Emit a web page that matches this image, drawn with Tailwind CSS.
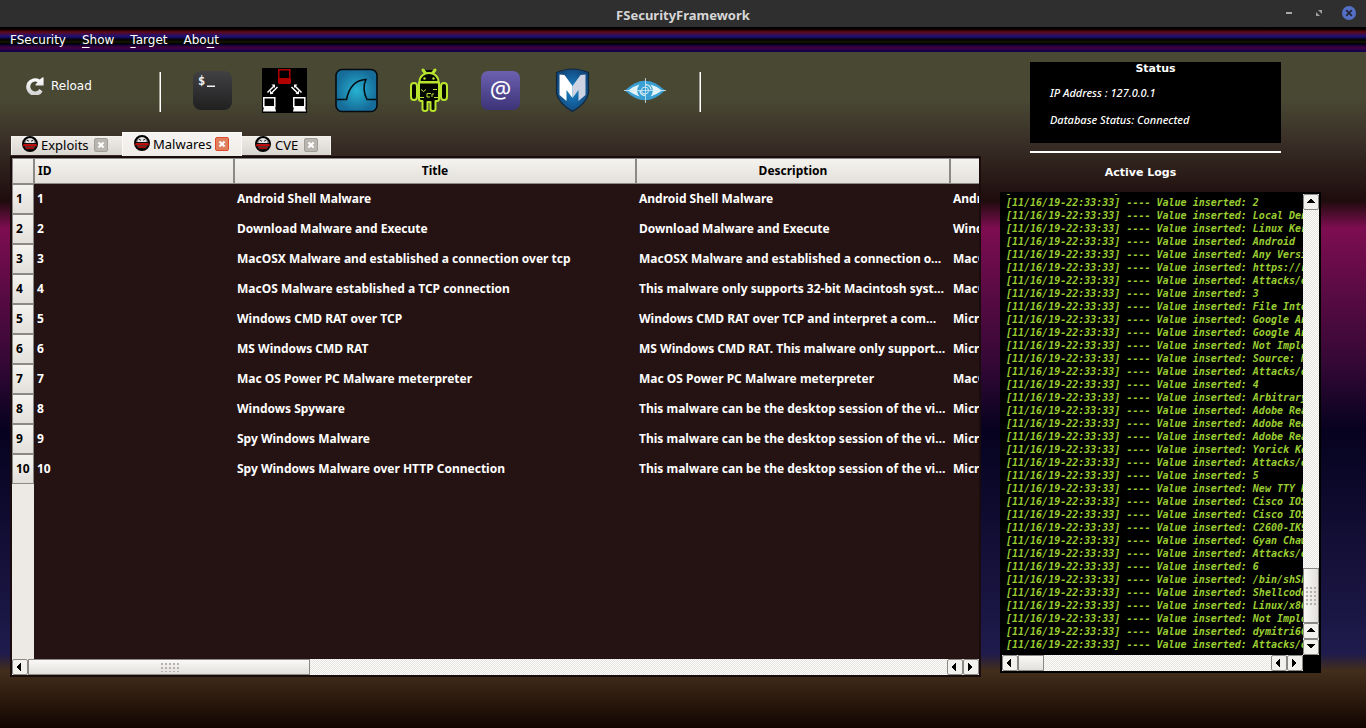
<!DOCTYPE html>
<html lang="en">
<head>
<meta charset="utf-8">
<title>FSecurityFramework</title>
<script src="https://cdn.jsdelivr.net/npm/@tailwindcss/browser@4"></script>
</head>
<body class="min-h-screen flex flex-col overflow-hidden text-white text-xs font-['DejaVu_Sans',sans-serif] bg-[#120500]">

<svg class="hidden">
  <defs>
    <symbol id="up" viewBox="0 0 8 4"><path d="M3 0h2v1h1v1h1v1h1v1H0V3h1V2h1V1h1z" fill="#000"/></symbol>
    <symbol id="down" viewBox="0 0 8 4"><path d="M0 0h8v1H7v1H6v1H5v1H3V3H2V2H1V1H0z" fill="#000"/></symbol>
    <symbol id="left" viewBox="0 0 4 8"><path d="M4 0v8H3V7H2V6H1V5H0V3h1V2h1V1h1V0z" fill="#000"/></symbol>
    <symbol id="right" viewBox="0 0 4 8"><path d="M0 0v8h1V7h1V6h1V5h1V3H3V2H2V1H1V0z" fill="#000"/></symbol>
    <symbol id="cross" viewBox="0 0 14 14"><path d="M4 4l6 6M10 4l-6 6" stroke="#fff" stroke-width="2.4"/></symbol>
    <symbol id="agent" viewBox="0 0 16 16">
      <circle cx="8" cy="8" r="7" fill="#8c8c8c" stroke="#000" stroke-width="2"/>
      <path d="M3.800 7Q4 2.200 8 2.200T12.200 7z" fill="#e4e4e4"/>
      <path d="M5 4.400l2 .8M11 4.400l-2 .8" stroke="#222" stroke-width="1"/>
      <path d="M1.500 7h13v1.200h-13z" fill="#111"/>
      <path d="M1.200 8.200h13.600v2.200H1.200z" fill="#c80000"/>
      <path d="M2 10.400h12v1H2zM3 13h10v1H3z" fill="#111"/>
      <path d="M4 11.400h8v1.600H4z" fill="#b00000"/>
    </symbol>
  </defs>
</svg>

<header class="h-[27px] shrink-0 relative flex items-center justify-end bg-[#2f2f2f]">
  <h1 class="absolute inset-x-0 top-[5px] text-center text-[13px] leading-5 font-bold text-[#d6d6d6] font-['Noto_Sans',sans-serif]">FSecurityFramework</h1>
  <div class="relative flex items-center gap-5 pr-2.5 pb-0.5">
    <button aria-label="Minimize" class="w-3.5 h-3.5 flex items-center justify-center"><svg class="w-1.5 h-0.5" viewBox="0 0 6 2"><path d="M0 0h6v2H0z" fill="#a8a8a8"/></svg></button>
    <button aria-label="Restore" class="w-1.5 h-3.5 flex items-center"><svg class="w-1.5 h-1.5" viewBox="0 0 6 6"><path d="M2 0h4v4zM0 2v4h4z" fill="#a0a0a0"/></svg></button>
    <button aria-label="Close"><svg class="w-3.5 h-3.5 block" viewBox="0 0 14 14"><circle cx="7" cy="7" r="7" fill="#5470c6"/><path d="M4.200 4.200l5.600 5.600M9.800 4.200L4.200 9.800" stroke="#24283a" stroke-width="1.800"/></svg></button>
  </div>
</header>

<nav class="h-[25px] shrink-0 flex items-center gap-4 px-2.5 bg-[linear-gradient(to_bottom,#000_0,#080000_9%,#620812_20%,#3a0e50_29%,#1c1074_39%,#0b0630_46%,#020200_52%,#171700_60%,#050500_66%,#01002c_70%,#3c0038_79%,#3a0044_86%,#12004c_96%,#100548_100%)]">
  <button>FSecurity</button>
  <button><span class="underline underline-offset-3">S</span>how</button>
  <button><span class="underline underline-offset-3">T</span>arget</button>
  <button>Abo<span class="underline underline-offset-3">u</span>t</button>
</nav>

<main class="grow flex pl-2.5 pr-[45px] gap-[19px] bg-[linear-gradient(to_bottom,#484833_0,#484833_7%,#3a3028_13%,#1e0c0c_22%,#7d0d50_26%,#340835_46%,#06021f_56%,#1f1b4c_89%,#432e1b_91.500%,#120500_100%)]">

  <section class="grow min-w-0 flex flex-col pb-[51px]">
    <div class="h-20 shrink-0 flex items-center pl-4">
      <button class="w-[133px] flex items-center gap-[7px] pb-3">
        <svg class="w-[18px] h-[18px]" viewBox="0 0 18 18"><defs><linearGradient id="rl" x1="0" y1="0" x2="0" y2="1"><stop offset="0" stop-color="#fff"/><stop offset="1" stop-color="#d0d0d0"/></linearGradient></defs><path d="M13.800 2.600A8.800 8.800 0 1 0 16.600 14.400L13.400 12A4.900 4.900 0 1 1 11.600 5.200L9.600 7.200v1.200H17.600V.4h-1.400z" fill="url(#rl)"/></svg>
        Reload
      </button>
      <div class="w-0.5 h-10 border-l border-[#a9a498] bg-white"></div>
      <div class="flex items-center gap-[26px] pl-[29px] pr-[31px] pb-1">
        <button aria-label="Terminal"><svg class="w-[46px] h-[46px] block" viewBox="0 0 46 46"><defs><linearGradient id="tm" x1="0" y1="0" x2="0" y2="1"><stop offset="0" stop-color="#414143"/><stop offset="1" stop-color="#202021"/></linearGradient></defs><rect x="3" y="4" width="39" height="39" rx="8" fill="url(#tm)"/><text x="8" y="18" font-family="DejaVu Sans Mono" font-size="12" font-weight="bold" fill="#f2f2f2">$</text><path d="M17 18.500h8v1.500h-8z" fill="#f2f2f2"/></svg></button>
        <button aria-label="Network attack"><svg class="w-[46px] h-[46px] block" viewBox="0 0 46 46"><path d="M0 1h45v45H0z" fill="#000"/>
          <g fill="none" stroke-width="1.500"><path d="M16.800 2.800h11v9h-11z" stroke="#b00000"/><path d="M1.800 30.800h11v9h-11zM31.800 30.800h11v9h-11z" stroke="#fff"/></g>
          <path d="M16 12h13v4h-1l1 1H16l1-1h-1z" fill="#b00000"/>
          <path d="M2 40h11l1 4.500H1zM32 40h11l1 4.500H31z" fill="#fff"/>
          <g stroke="#fff" stroke-width="1.500" fill="#fff"><path d="M5.500 25.500l7-7M8.500 27l7-7M39.500 25.500l-7-7M36.500 27l-7-7"/><path d="M9.500 18h3.500v3.500zM8 24v3.500h3.500zM35.500 18H32v3.500zM37 24v3.500h-3.500z" stroke="none" transform="translate(0 -.5)"/></g></svg></button>
        <button aria-label="Packet capture"><svg class="w-[46px] h-[46px] block" viewBox="0 0 46 46"><defs><radialGradient id="ws"><stop offset="0" stop-color="#27b2d0"/><stop offset="1" stop-color="#166d9a"/></radialGradient></defs><rect x="2" y="2.500" width="41" height="42" rx="6" fill="url(#ws)" stroke="#050b0f" stroke-width="1.600"/><path d="M3 32.500H12.500C15 20 21 13 32 12.500C29 18 29.500 26 33 32.500H42" fill="none" stroke="#050b0f" stroke-width="1.500"/></svg></button>
        <button aria-label="Android"><svg class="w-[46px] h-[46px] block" viewBox="0 0 46 46"><g fill="#050800" stroke="#b9e52f" stroke-width="2" stroke-linejoin="round"><path d="M17 3l3 4h6l3-4" stroke-width="3" stroke-linecap="round"/><path d="M13.500 15C13.500 3 32.500 3 32.500 15z"/><rect x="5" y="16" width="6" height="17" rx="3"/><rect x="35" y="16" width="6" height="17" rx="3"/><path d="M13 15.500h20V32q0 2-2 2h-1.500v8q0 2-2.500 2t-2.500-2v-7h-3v7q0 2-2.500 2t-2.500-2v-8H15q-2 0-2-2z"/></g><g fill="none" stroke="#b9e52f" stroke-width="1"><path d="M15 22.500l2.500 2 2.500-2M31 22.500h-4M14 30.500h4M32 30.500h-4M25 26.500h-4v3.500h3M26 30v-3h2"/></g><g fill="#b9e52f"><circle cx="18.500" cy="11.500" r="1.200"/><circle cx="27.500" cy="11.500" r="1.200"/></g></svg></button>
        <button aria-label="Mail"><svg class="w-[46px] h-[46px] block" viewBox="0 0 46 46"><defs><linearGradient id="at" x1="0" y1="0" x2="0" y2="1"><stop offset="0" stop-color="#6b61b0"/><stop offset="1" stop-color="#3d3378"/></linearGradient></defs><rect x="3" y="4" width="39" height="39" rx="7" fill="url(#at)"/><text x="22.500" y="31" text-anchor="middle" font-family="Noto Sans" font-size="24" fill="#fff">@</text></svg></button>
        <button aria-label="Metasploit"><svg class="w-[46px] h-[46px] block" viewBox="0 0 46 46"><defs><radialGradient id="ms"><stop offset="0" stop-color="#1a86cc"/><stop offset="1" stop-color="#124a80"/></radialGradient></defs><path d="M22.500 2Q30 2 38.500 5.500V26Q37 36 22.500 44.500Q8 36 6.500 26V5.500Q15 2 22.500 2z" fill="url(#ms)" stroke="#10263c" stroke-width="1.200"/><path d="M9.500 7.500l5 .5l8 11V31l-6-8v11l-7-6z" fill="#fff"/><path d="M35.500 7.500l-5 .5l-8 11V31l6-8v11l7-6z" fill="#cdd3e3"/></svg></button>
        <button aria-label="Watch"><svg class="w-[46px] h-[46px] block" viewBox="0 0 46 46"><path d="M3 23.500Q23 4 43 23.500Q23 43 3 23.500z" fill="#3a9fd4"/><path d="M6 23.500Q12 19 17.500 17.500Q13 23.500 17.500 29.500Q12 28 6 23.500zM40 23.500Q34 19 28.500 17.500Q33 23.500 28.500 29.500Q34 28 40 23.500z" fill="#e3f4f8"/><g fill="none" stroke="#cfeaf5"><circle cx="23" cy="23.500" r="3.500"/><path d="M18 23.500a5 5 0 0 0 5 5M23 17.500a6 6 0 0 1 6 5" stroke-width="1.500"/><path d="M23.500 11v25M2 23.500h42" stroke-width=".8"/></g></svg></button>
      </div>
      <div class="w-0.5 h-10 border-l border-[#a9a498] bg-white"></div>
    </div>

    <div role="tablist" class="h-6 shrink-0 flex items-end pl-px text-black text-[13px] leading-5 font-['Noto_Sans',sans-serif]">
      <div class="w-[111px] h-[19px] mb-px flex items-center gap-[3px] pl-2.5 pb-0.5 border-t border-l border-[#f4f2ef] bg-linear-to-b from-[#efece8] to-[#d9d6d1]">
        <svg class="w-4 h-4 mb-0.5"><use href="#agent"/></svg><button role="tab">Exploits</button>
        <button aria-label="Close Exploits" class="ml-0.5 border border-[#a19d98] rounded-xs bg-[#b9b5b0]"><svg class="w-3 h-3 block"><use href="#cross"/></svg></button>
      </div>
      <div class="w-[120px] h-6 flex items-center gap-[3px] pl-[11px] pb-0.5 border-t border-x border-[#fbfaf8] bg-linear-to-b from-[#f6f4f2] to-[#efebe7]">
        <svg class="w-4 h-4 mb-0.5"><use href="#agent"/></svg><button role="tab" aria-selected="true">Malwares</button>
        <button aria-label="Close Malwares" class="border border-[#df4a2c] rounded-xs bg-[#df7f5c]"><svg class="w-3 h-3 block"><use href="#cross"/></svg></button>
      </div>
      <div class="w-[89px] h-[19px] mb-px flex items-center gap-1 pl-[13px] pb-0.5 border-t border-r border-[#f4f2ef] bg-linear-to-b from-[#efece8] to-[#d9d6d1]">
        <svg class="w-4 h-4 mb-0.5"><use href="#agent"/></svg><button role="tab">CVE</button>
        <button aria-label="Close CVE" class="ml-0.5 border border-[#a19d98] rounded-xs bg-[#b9b5b0]"><svg class="w-3 h-3 block"><use href="#cross"/></svg></button>
      </div>
    </div>

    <div class="grow flex flex-col border-2 border-[#1a0c0c] bg-[#251313] font-['Noto_Sans',sans-serif] font-bold">
      <div class="grow relative bg-linear-to-r from-[#edeae6] from-[22px] to-[#251313] to-[22px]">
        <table class="w-full table-fixed border-separate border-spacing-0 text-left text-xs leading-4 whitespace-nowrap [&_td]:h-[30px] [&_td]:pl-[3px] [&_td]:pr-1 [&_td]:overflow-hidden [&_td]:text-ellipsis [&_td:last-child]:text-clip [&_td:last-child]:pr-0 [&_th]:text-black [&_th]:bg-linear-to-b [&_th]:from-[#f5f3ef] [&_th]:to-[#e3e0db] [&_th]:border [&_th]:border-[#8b8986] [&_thead_th]:h-[26px] [&_tbody_th]:pl-[3px]">
          <colgroup><col class="w-[22px]"><col class="w-[200px]"><col class="w-[402px]"><col class="w-[314px]"><col></colgroup>
          <thead><tr><th></th><th class="pl-[3px]">ID</th><th class="text-center">Title</th><th class="text-center">Description</th><th class="border-r-0!"></th></tr></thead>
          <tbody>
            <tr><th>1</th><td>1</td><td>Android Shell Malware</td><td>Android Shell Malware</td><td>Andro</td></tr>
            <tr><th>2</th><td>2</td><td>Download Malware and Execute</td><td>Download Malware and Execute</td><td>Wind</td></tr>
            <tr><th>3</th><td>3</td><td>MacOSX Malware and established a connection over tcp</td><td>MacOSX Malware and established a connection over tcp</td><td>MacO</td></tr>
            <tr><th>4</th><td>4</td><td>MacOS Malware established a TCP connection</td><td>This malware only supports 32-bit Macintosh systems</td><td>MacO</td></tr>
            <tr><th>5</th><td>5</td><td>Windows CMD RAT over TCP</td><td>Windows CMD RAT over TCP and interpret a command</td><td>Micro</td></tr>
            <tr><th>6</th><td>6</td><td>MS Windows CMD RAT</td><td>MS Windows CMD RAT. This malware only supports Windows</td><td>Micro</td></tr>
            <tr><th>7</th><td>7</td><td>Mac OS Power PC Malware meterpreter</td><td>Mac OS Power PC Malware meterpreter</td><td>MacO</td></tr>
            <tr><th>8</th><td>8</td><td>Windows Spyware</td><td>This malware can be the desktop session of the victim</td><td>Micro</td></tr>
            <tr><th>9</th><td>9</td><td>Spy Windows Malware</td><td>This malware can be the desktop session of the victim</td><td>Micro</td></tr>
            <tr><th>10</th><td>10</td><td>Spy Windows Malware over HTTP Connection</td><td>This malware can be the desktop session of the victim</td><td>Micro</td></tr>
          </tbody>
        </table>
      </div>
      <div class="h-4 shrink-0 flex bg-[repeating-conic-gradient(#fff_0_25%,#e6e3de_0_50%)] bg-[length:2px_2px]">
        <button aria-label="Scroll left" class="w-4 pr-0.5 flex items-center justify-center rounded-xs border border-[#8b8986] bg-[#f3f1ee]"><svg class="w-1 h-2"><use href="#left"/></svg></button>
        <div class="w-[282px] flex items-center justify-center border border-[#8b8986] bg-linear-to-b from-[#faf9f7] to-[#e3e0dc]"><div class="w-[19px] h-2.5 bg-[radial-gradient(#b5b1ac_1px,transparent_1px)] bg-[length:4px_4px]"></div></div>
        <button aria-label="Scroll back" class="ml-auto w-4 pr-0.5 flex items-center justify-center rounded-xs border border-[#8b8986] bg-[#f3f1ee]"><svg class="w-1 h-2"><use href="#left"/></svg></button>
        <button aria-label="Scroll right" class="w-4 pr-0.5 flex items-center justify-center rounded-xs border border-[#8b8986] bg-[#f3f1ee]"><svg class="w-1 h-2"><use href="#right"/></svg></button>
      </div>
    </div>
  </section>

  <aside class="w-[321px] shrink-0 flex flex-col pt-2.5 pb-[55px]">
    <section class="h-[81px] shrink-0 ml-[30px] mr-10 bg-black">
      <h2 class="text-[11px] leading-[14px] font-bold text-center">Status</h2>
      <p class="pt-2.5 pl-5 text-[11px] leading-[14px] font-medium italic font-['Noto_Sans',sans-serif]">IP Address : 127.0.0.1</p>
      <p class="pt-[13px] pl-5 text-[11px] leading-[14px] font-medium italic font-['Noto_Sans',sans-serif]">Database Status: Connected</p>
    </section>
    <hr class="mt-2 ml-[30px] mr-10 border-t-2 border-white">
    <h2 class="pt-3 pb-3 pr-10 text-[11px] leading-[15px] font-bold text-center">Active Logs</h2>
    <div class="grow basis-0 min-h-0 flex flex-col border-2 border-black bg-black">
      <div class="grow min-h-0 flex">
        <div class="grow min-w-0 overflow-hidden">
        <pre class="-mt-3 pl-1 pt-px text-[10px] leading-[13px] font-bold italic text-[#9acd32] font-['DejaVu_Sans_Mono',monospace]">[11/16/19-22:33:33] ---- Value inserted: Attacks/
[11/16/19-22:33:33] ---- Value inserted: 2
[11/16/19-22:33:33] ---- Value inserted: Local Den
[11/16/19-22:33:33] ---- Value inserted: Linux Ker
[11/16/19-22:33:33] ---- Value inserted: Android
[11/16/19-22:33:33] ---- Value inserted: Any Versi
[11/16/19-22:33:33] ---- Value inserted: https://r
[11/16/19-22:33:33] ---- Value inserted: Attacks/e
[11/16/19-22:33:33] ---- Value inserted: 3
[11/16/19-22:33:33] ---- Value inserted: File Inte
[11/16/19-22:33:33] ---- Value inserted: Google An
[11/16/19-22:33:33] ---- Value inserted: Google An
[11/16/19-22:33:33] ---- Value inserted: Not Imple
[11/16/19-22:33:33] ---- Value inserted: Source: N
[11/16/19-22:33:33] ---- Value inserted: Attacks/e
[11/16/19-22:33:33] ---- Value inserted: 4
[11/16/19-22:33:33] ---- Value inserted: Arbitrary
[11/16/19-22:33:33] ---- Value inserted: Adobe Rea
[11/16/19-22:33:33] ---- Value inserted: Adobe Rea
[11/16/19-22:33:33] ---- Value inserted: Adobe Rea
[11/16/19-22:33:33] ---- Value inserted: Yorick Ko
[11/16/19-22:33:33] ---- Value inserted: Attacks/e
[11/16/19-22:33:33] ---- Value inserted: 5
[11/16/19-22:33:33] ---- Value inserted: New TTY P
[11/16/19-22:33:33] ---- Value inserted: Cisco IOS
[11/16/19-22:33:33] ---- Value inserted: Cisco IOS
[11/16/19-22:33:33] ---- Value inserted: C2600-IK9
[11/16/19-22:33:33] ---- Value inserted: Gyan Chaw
[11/16/19-22:33:33] ---- Value inserted: Attacks/e
[11/16/19-22:33:33] ---- Value inserted: 6
[11/16/19-22:33:33] ---- Value inserted: /bin/shSh
[11/16/19-22:33:33] ---- Value inserted: Shellcode
[11/16/19-22:33:33] ---- Value inserted: Linux/x86
[11/16/19-22:33:33] ---- Value inserted: Not Imple
[11/16/19-22:33:33] ---- Value inserted: dymitri66
[11/16/19-22:33:33] ---- Value inserted: Attacks/e</pre>
        </div>
        <div class="w-4 shrink-0 flex flex-col bg-[repeating-conic-gradient(#fff_0_25%,#e6e3de_0_50%)] bg-[length:2px_2px]">
          <button aria-label="Scroll up" class="h-4 pb-0.5 flex items-center justify-center rounded-xs border border-[#8b8986] bg-[#f3f1ee]"><svg class="w-2 h-1"><use href="#up"/></svg></button>
          <div class="mt-auto h-[55px] flex items-center justify-center border border-[#8b8986] bg-linear-to-r from-[#faf9f7] to-[#e3e0dc]"><div class="w-3 h-5 bg-[radial-gradient(#b5b1ac_1px,transparent_1px)] bg-[length:4px_4px]"></div></div>
          <button aria-label="Scroll up one line" class="h-4 pb-0.5 flex items-center justify-center rounded-xs border border-[#8b8986] bg-[#f3f1ee]"><svg class="w-2 h-1"><use href="#up"/></svg></button>
          <button aria-label="Scroll down" class="h-4 pb-0.5 flex items-center justify-center rounded-xs border border-[#8b8986] bg-[#f3f1ee]"><svg class="w-2 h-1"><use href="#down"/></svg></button>
        </div>
      </div>
      <div class="h-4 shrink-0 mr-4 flex bg-[repeating-conic-gradient(#fff_0_25%,#e6e3de_0_50%)] bg-[length:2px_2px]">
        <button aria-label="Scroll logs left" class="w-4 pr-0.5 flex items-center justify-center rounded-xs border border-[#8b8986] bg-[#f3f1ee]"><svg class="w-1 h-2"><use href="#left"/></svg></button>
        <div class="w-[26px] border border-[#8b8986] bg-linear-to-b from-[#faf9f7] to-[#e3e0dc]"></div>
        <button aria-label="Scroll logs back" class="ml-auto w-4 pr-0.5 flex items-center justify-center rounded-xs border border-[#8b8986] bg-[#f3f1ee]"><svg class="w-1 h-2"><use href="#left"/></svg></button>
        <button aria-label="Scroll logs right" class="w-4 pr-0.5 flex items-center justify-center rounded-xs border border-[#8b8986] bg-[#f3f1ee]"><svg class="w-1 h-2"><use href="#right"/></svg></button>
      </div>
    </div>
  </aside>
</main>
</body>
</html>
